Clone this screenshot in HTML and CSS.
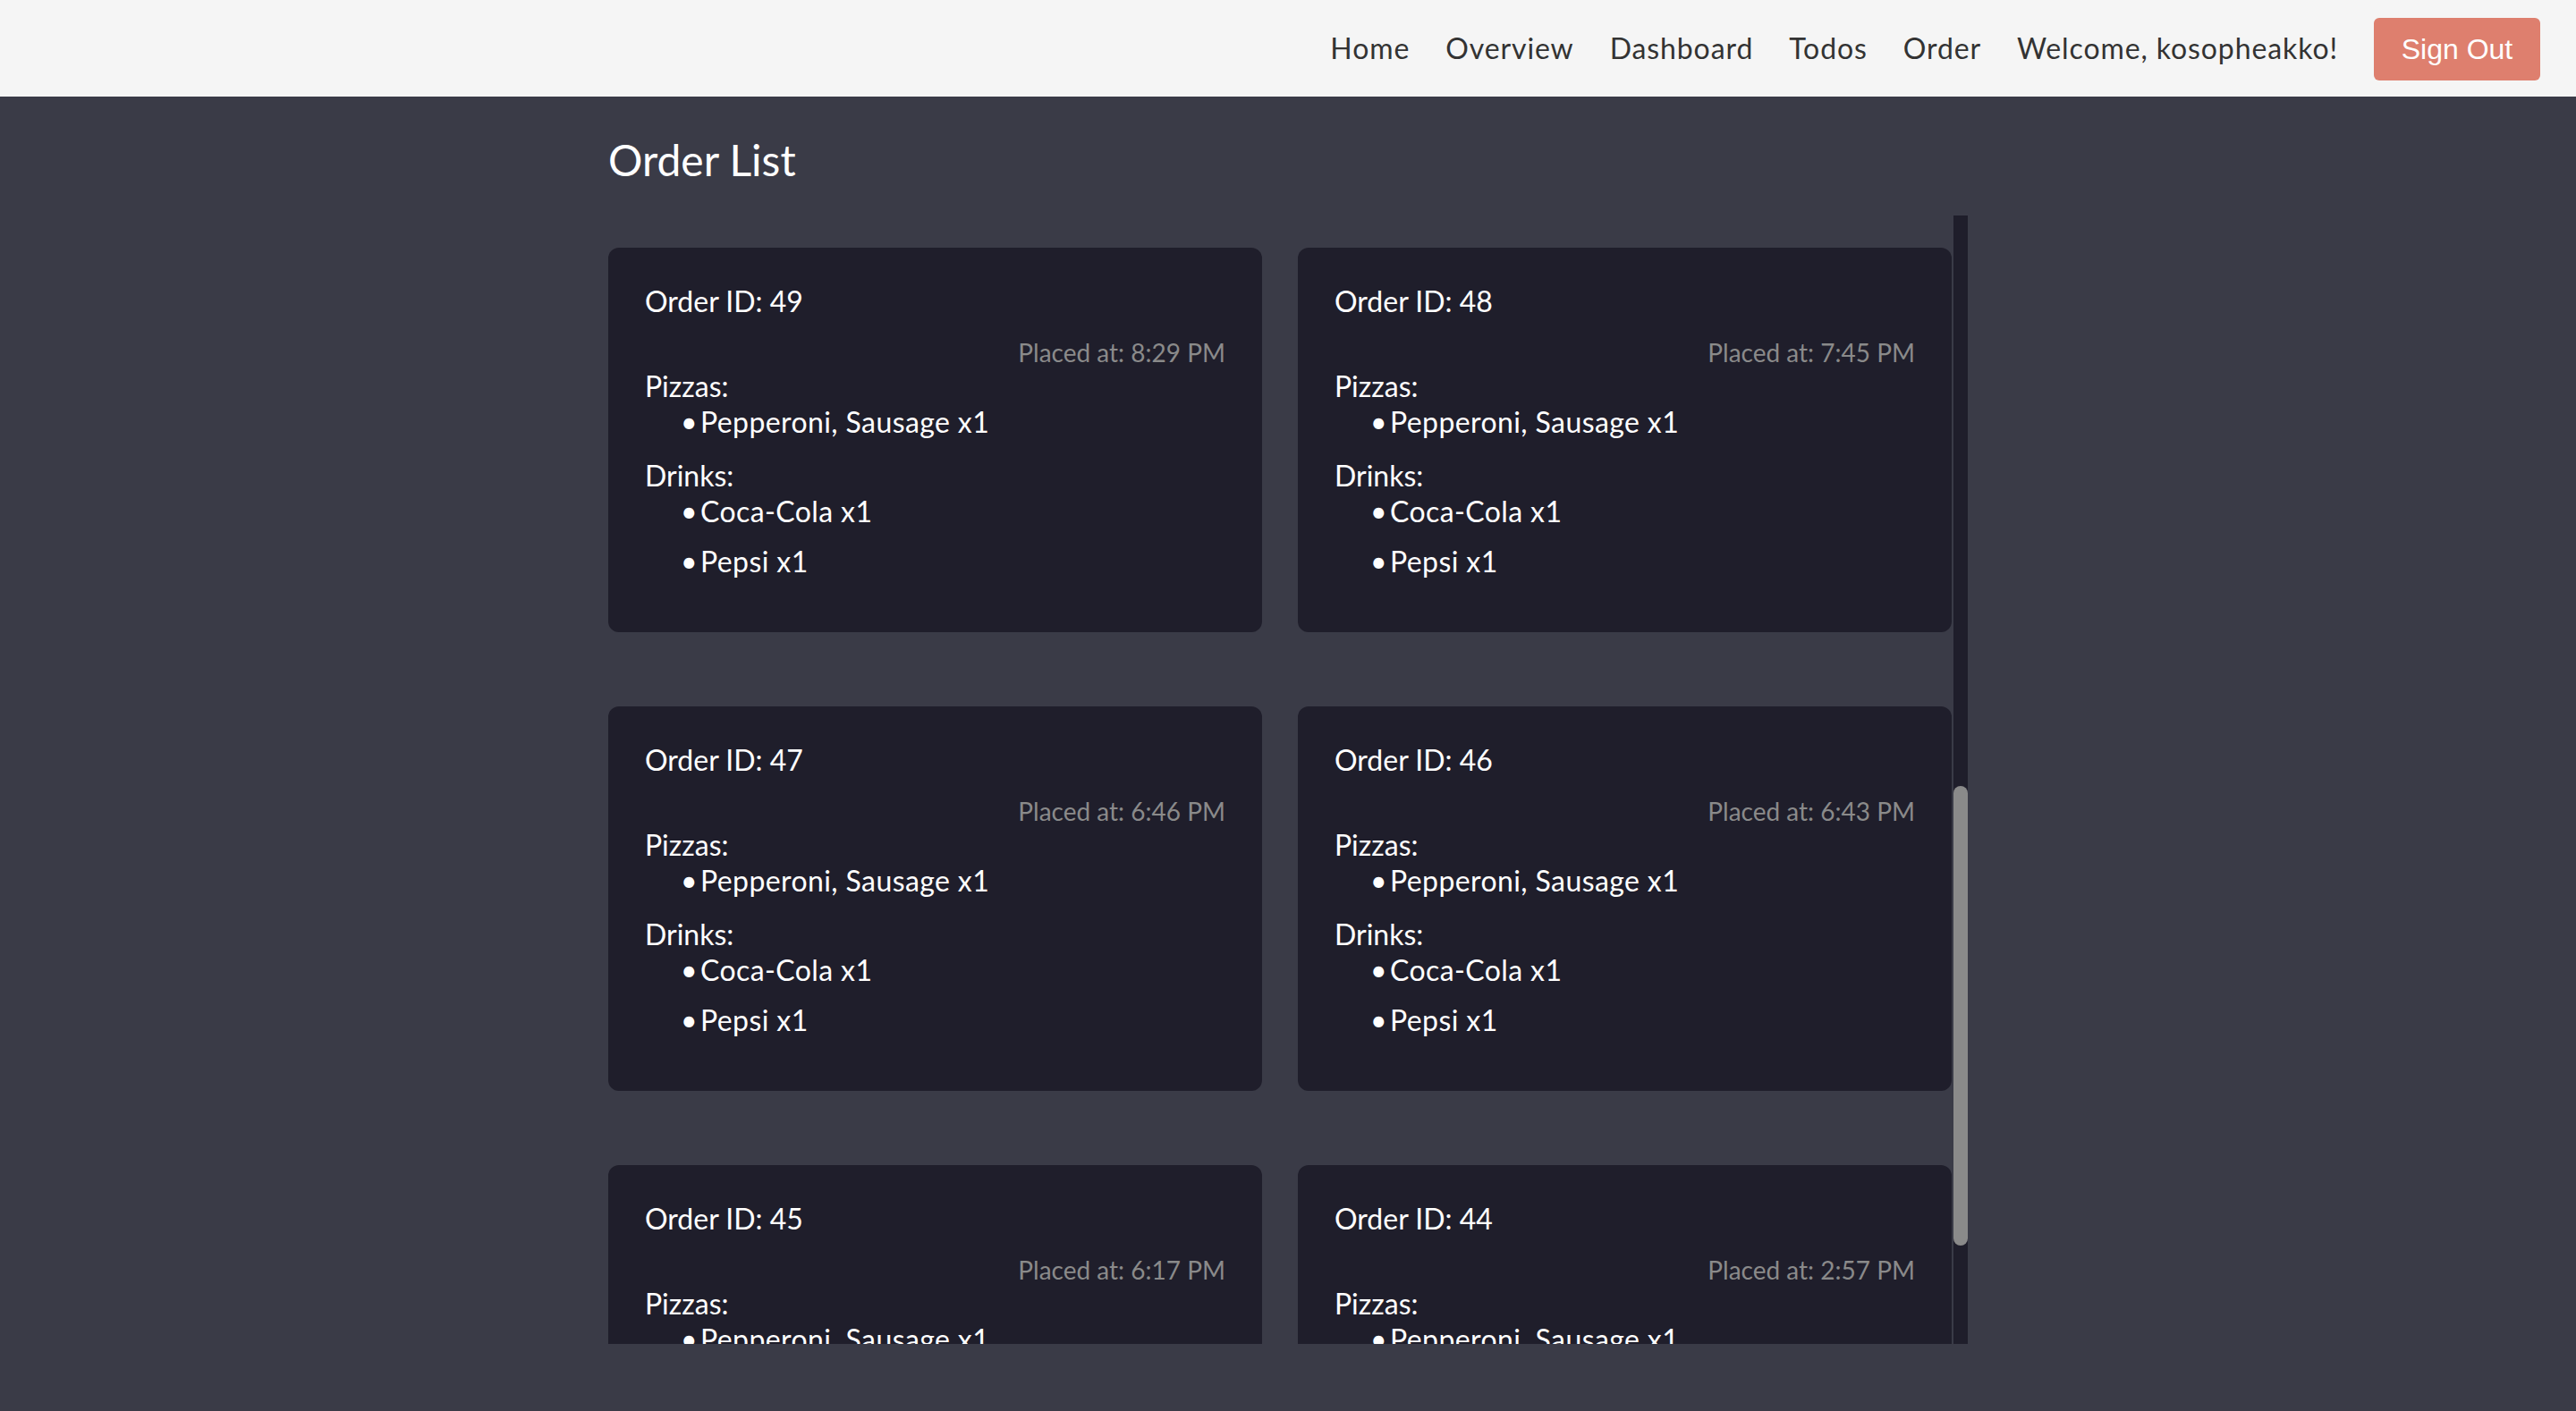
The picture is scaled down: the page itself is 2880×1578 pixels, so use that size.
FILE: index.html
```html
<!DOCTYPE html>
<html lang="en">
<head>
<meta charset="utf-8">
<title>Order List</title>
<link rel="stylesheet" href="styles.css">
</head>
<body>
<header class="topbar">
  <nav class="nav">
    <a class="nav-link" href="#">Home</a>
    <a class="nav-link" href="#">Overview</a>
    <a class="nav-link" href="#">Dashboard</a>
    <a class="nav-link" href="#">Todos</a>
    <a class="nav-link" href="#">Order</a>
    <span class="nav-welcome">Welcome, kosopheakko!</span>
    <button class="signout" type="button">Sign Out</button>
  </nav>
</header>
<main class="main">
  <h1 class="title">Order List</h1>
  <div class="list-wrap">
    <div class="orders" id="orders">
      <div class="grid">
        <div class="card"><div class="oid">Order ID: 55</div><div class="placed">Placed at: 11:02 PM</div><div class="sec"><div class="label">Pizzas:</div><ul class="items"><li>Pepperoni, Sausage x1</li></ul></div><div class="sec"><div class="label">Drinks:</div><ul class="items"><li>Coca-Cola x1</li><li>Pepsi x1</li></ul></div></div>
        <div class="card"><div class="oid">Order ID: 54</div><div class="placed">Placed at: 10:41 PM</div><div class="sec"><div class="label">Pizzas:</div><ul class="items"><li>Pepperoni, Sausage x1</li></ul></div><div class="sec"><div class="label">Drinks:</div><ul class="items"><li>Coca-Cola x1</li><li>Pepsi x1</li></ul></div></div>
        <div class="card"><div class="oid">Order ID: 53</div><div class="placed">Placed at: 10:12 PM</div><div class="sec"><div class="label">Pizzas:</div><ul class="items"><li>Pepperoni, Sausage x1</li></ul></div><div class="sec"><div class="label">Drinks:</div><ul class="items"><li>Coca-Cola x1</li><li>Pepsi x1</li></ul></div></div>
        <div class="card"><div class="oid">Order ID: 52</div><div class="placed">Placed at: 9:58 PM</div><div class="sec"><div class="label">Pizzas:</div><ul class="items"><li>Pepperoni, Sausage x1</li></ul></div><div class="sec"><div class="label">Drinks:</div><ul class="items"><li>Coca-Cola x1</li><li>Pepsi x1</li></ul></div></div>
        <div class="card"><div class="oid">Order ID: 51</div><div class="placed">Placed at: 9:20 PM</div><div class="sec"><div class="label">Pizzas:</div><ul class="items"><li>Pepperoni, Sausage x1</li></ul></div><div class="sec"><div class="label">Drinks:</div><ul class="items"><li>Coca-Cola x1</li><li>Pepsi x1</li></ul></div></div>
        <div class="card"><div class="oid">Order ID: 50</div><div class="placed">Placed at: 8:47 PM</div><div class="sec"><div class="label">Pizzas:</div><ul class="items"><li>Pepperoni, Sausage x1</li></ul></div><div class="sec"><div class="label">Drinks:</div><ul class="items"><li>Coca-Cola x1</li><li>Pepsi x1</li></ul></div></div>
        <div class="card"><div class="oid">Order ID: 49</div><div class="placed">Placed at: 8:29 PM</div><div class="sec"><div class="label">Pizzas:</div><ul class="items"><li>Pepperoni, Sausage x1</li></ul></div><div class="sec"><div class="label">Drinks:</div><ul class="items"><li>Coca-Cola x1</li><li>Pepsi x1</li></ul></div></div>
        <div class="card"><div class="oid">Order ID: 48</div><div class="placed">Placed at: 7:45 PM</div><div class="sec"><div class="label">Pizzas:</div><ul class="items"><li>Pepperoni, Sausage x1</li></ul></div><div class="sec"><div class="label">Drinks:</div><ul class="items"><li>Coca-Cola x1</li><li>Pepsi x1</li></ul></div></div>
        <div class="card"><div class="oid">Order ID: 47</div><div class="placed">Placed at: 6:46 PM</div><div class="sec"><div class="label">Pizzas:</div><ul class="items"><li>Pepperoni, Sausage x1</li></ul></div><div class="sec"><div class="label">Drinks:</div><ul class="items"><li>Coca-Cola x1</li><li>Pepsi x1</li></ul></div></div>
        <div class="card"><div class="oid">Order ID: 46</div><div class="placed">Placed at: 6:43 PM</div><div class="sec"><div class="label">Pizzas:</div><ul class="items"><li>Pepperoni, Sausage x1</li></ul></div><div class="sec"><div class="label">Drinks:</div><ul class="items"><li>Coca-Cola x1</li><li>Pepsi x1</li></ul></div></div>
        <div class="card"><div class="oid">Order ID: 45</div><div class="placed">Placed at: 6:17 PM</div><div class="sec"><div class="label">Pizzas:</div><ul class="items"><li>Pepperoni, Sausage x1</li></ul></div><div class="sec"><div class="label">Drinks:</div><ul class="items"><li>Coca-Cola x1</li><li>Pepsi x1</li></ul></div></div>
        <div class="card"><div class="oid">Order ID: 44</div><div class="placed">Placed at: 2:57 PM</div><div class="sec"><div class="label">Pizzas:</div><ul class="items"><li>Pepperoni, Sausage x1</li></ul></div><div class="sec"><div class="label">Drinks:</div><ul class="items"><li>Coca-Cola x1</li><li>Pepsi x1</li></ul></div></div>
      </div>
    </div>
    <div class="scrolltrack" id="track"><div class="scrollthumb" id="thumb"></div></div>
  </div>
</main>
<script src="script.js"></script>
</body>
</html>
```

FILE: styles.css
```css
* { box-sizing: border-box; }
html, body { margin: 0; padding: 0; }
body {
  background: #3a3b47;
  font-family: "Lato", "Noto Sans", sans-serif;
  color: #ffffff;
  min-height: 1578px;
}
.topbar {
  height: 108px;
  background: #f5f5f5;
  display: flex;
  align-items: center;
  justify-content: flex-end;
  padding-right: 40px;
}
.nav {
  display: flex;
  align-items: center;
  gap: 40px;
}
.nav-link, .nav-welcome {
  font-size: 32px;
  color: #333333;
  text-decoration: none;
  line-height: 40px;
  letter-spacing: 0.9px;
}
.signout {
  font-family: "Liberation Sans", Arial, sans-serif;
  font-size: 32px;
  color: #ffffff;
  background: #de7f6e;
  border: none;
  border-radius: 6px;
  height: 70px;
  width: 186px;
  padding: 0;
  margin-top: 2px;
}
.main {
  width: 1520px;
  margin: 0 auto;
}
.title {
  font-size: 48px;
  font-weight: 400;
  line-height: 60px;
  margin: 41px 0 32px;
}
.list-wrap {
  display: flex;
  height: 1262px;
}
.orders {
  flex: 1;
  height: 100%;
  overflow-y: scroll;
  scrollbar-width: none;
}
.orders::-webkit-scrollbar { display: none; }
.scrolltrack {
  width: 16px;
  flex: none;
  height: 100%;
  background: #1f1e2b;
  display: flex;
  flex-direction: column;
}
.scrollthumb {
  width: 16px;
  height: 514px;
  margin-top: 638px;
  background: #8a8a8a;
  border-radius: 8px;
}
.grid {
  display: grid;
  grid-template-columns: 1fr 1fr;
  column-gap: 40px;
  row-gap: 83px;
  padding: 63px 2px 40px 0;
}
.card {
  background: #1f1e2b;
  border-radius: 12px;
  padding: 40px 41px 39px;
  height: 430px;
}
.oid {
  font-size: 32px;
  line-height: 40px;
  margin-bottom: 20px;
}
.placed {
  font-size: 28px;
  line-height: 35px;
  color: #8a8a8a;
  text-align: right;
}
.sec { margin-bottom: 20px; }
.label {
  font-size: 32px;
  line-height: 40px;
}
.items {
  list-style: none;
  margin: 0;
  padding: 0 0 0 40px;
}
.items li {
  font-size: 32px;
  line-height: 40px;
  margin-bottom: 16px;
  letter-spacing: 0.4px;
}
.items li::before {
  content: "•";
  display: inline-block;
  width: 22px;
}
```

FILE: script.js
```js
(function () {
  var list = document.getElementById('orders');
  var thumb = document.getElementById('thumb');
  list.scrollTop = 1566;
  var view = list.clientHeight;
  var total = list.scrollHeight;
  thumb.style.height = Math.round(view * view / total) + 'px';
  thumb.style.marginTop = Math.round(list.scrollTop / total * view) + 'px';
})();
```
